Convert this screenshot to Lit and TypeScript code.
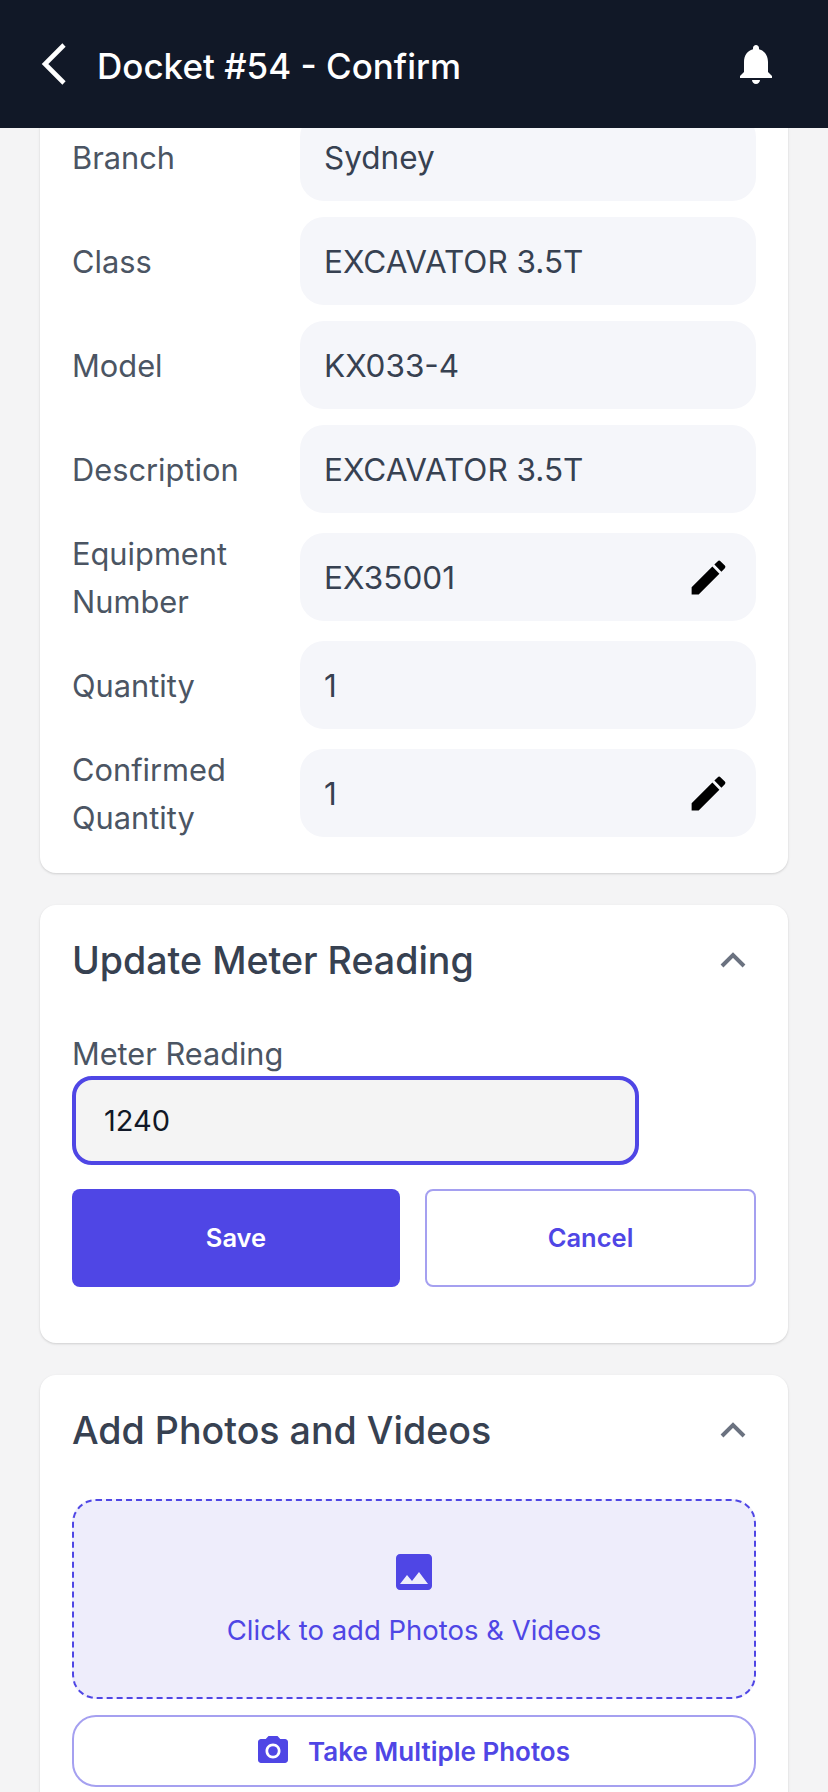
import { LitElement, html, css, svg } from "lit";
import { customElement } from "lit/decorators.js";

const editIcon = svg`<path d="M3 17.25V21h3.75L17.81 9.94l-3.75-3.75L3 17.25zM20.71 7.04c.39-.39.39-1.02 0-1.41l-2.34-2.34c-.39-.39-1.02-.39-1.41 0l-1.83 1.83 3.75 3.75 1.83-1.83z"/>`;

const rows: { label: string; value: string; edit?: boolean }[] = [
  { label: "Branch", value: "Sydney" },
  { label: "Class", value: "EXCAVATOR 3.5T" },
  { label: "Model", value: "KX033-4" },
  { label: "Description", value: "EXCAVATOR 3.5T" },
  { label: "Equipment Number", value: "EX35001", edit: true },
  { label: "Quantity", value: "1" },
  { label: "Confirmed Quantity", value: "1", edit: true },
];

@customElement("app-root")
export class AppRoot extends LitElement {
  static styles = css`
    :host {
      display: flex;
      flex-direction: column;
      height: 1792px;
      overflow: hidden;
      background: #f4f4f5;
      font-family: Inter, "Liberation Sans", sans-serif;
    }
    * { box-sizing: border-box; }
    .topbar {
      flex: none;
      height: 128px;
      background: #111827;
      display: flex;
      align-items: center;
      color: #fff;
      padding: 0 48px 0 38px;
      position: relative;
      z-index: 1;
    }
    .back { width: 30px; height: 44px; margin-right: 29px; display: block; }
    .title { flex: 1; font-size: 35px; font-weight: 500; line-height: 48px; padding-top: 4px; }
    .bell { width: 48px; height: 48px; fill: #fff; display: block; }
    .scroller { flex: 1; min-height: 0; overflow: hidden; }
    .content {
      margin-top: -15px;
      padding: 0 40px;
      display: flex;
      flex-direction: column;
      gap: 32px;
    }
    .card {
      background: #fff;
      border-radius: 16px;
      box-shadow: 0 1px 3px rgba(0,0,0,.1), 0 1px 2px rgba(0,0,0,.06);
      padding: 24px 32px 56px;
    }
    .details {
      padding: 0 32px 32px;
      display: flex;
      flex-direction: column;
      gap: 16px;
    }
    .row {
      display: grid;
      grid-template-columns: 228px 1fr;
      align-items: center;
    }
    .label { font-size: 30.8px; line-height: 48px; color: #4b5563; padding-right: 20px; transform: translateY(1px); }
    .field {
      height: 88px;
      border-radius: 24px;
      background: #f5f6fa;
      color: #374151;
      font-size: 31.5px;
      padding: 0 25px 0 24px;
      display: flex;
      align-items: center;
      justify-content: space-between;
    }
    .edit { width: 45px; height: 45px; fill: #000; display: block; }
    .head {
      height: 62px;
      margin-bottom: 38px;
      display: flex;
      align-items: center;
      justify-content: space-between;
    }
    .head h2 { margin: 0; padding-top: 2px; font-size: 37.6px; font-weight: 500; color: #374151; line-height: 60px; }
    .chev { width: 28px; height: 20px; margin-right: 9px; display: block; }
    .meter-label { font-size: 30.7px; line-height: 47px; color: #4b5563; padding-top: 1px; }
    .input {
      width: 567px;
      height: 89px;
      margin-top: -1px;
      border: 4px solid #4f46e5;
      border-radius: 20px;
      background: #f4f4f4;
      color: #111827;
      font-size: 29px;
      display: flex;
      align-items: center;
      padding-left: 28px;
    }
    .actions {
      margin-top: 24px;
      display: grid;
      grid-template-columns: 328px 1fr;
      gap: 25px;
    }
    .btn {
      height: 98px;
      border-radius: 8px;
      font-size: 25.5px;
      font-weight: 600;
      padding-bottom: 2px;
      display: flex;
      align-items: center;
      justify-content: center;
    }
    .save { background: #4f46e5; color: #fff; }
    .cancel { background: #fff; color: #4f46e5; border: 2px solid #a5a0f0; }
    .drop {
      height: 200px;
      border: 2.5px dashed #4f46e5;
      border-radius: 24px;
      background: #eeedfb;
      display: flex;
      flex-direction: column;
      align-items: center;
      justify-content: center;
      gap: 12px;
      color: #4f46e5;
      font-size: 27.5px;
      line-height: 44px;
      padding-top: 2px;
    }
    .drop svg { width: 48px; height: 48px; fill: #4f46e5; display: block; }
    .take {
      margin-top: 16px;
      height: 72px;
      border: 2px solid #a5a0f0;
      border-radius: 24px;
      background: #fff;
      color: #4f46e5;
      font-size: 26px;
      font-weight: 600;
      display: flex;
      align-items: center;
      justify-content: center;
      gap: 17px;
      padding-right: 3px;
    }
    .take svg { width: 36px; height: 36px; fill: #4f46e5; display: block; }
  `;

  private chevron() {
    return html`<svg class="chev" viewBox="0 0 28 20" fill="none" stroke="#6b7280" stroke-width="4"><path d="M3 16 14 5l11 11"/></svg>`;
  }

  render() {
    return html`
      <header class="topbar">
        <svg class="back" viewBox="0 0 30 44" fill="none" stroke="#fff" stroke-width="4.6"><path d="M26 3 7 22l19 19"/></svg>
        <div class="title">Docket #54 - Confirm</div>
        <svg class="bell" viewBox="0 0 24 24"><path d="M12 22c1.1 0 2-.9 2-2h-4c0 1.1.89 2 2 2zm6-6v-5c0-3.07-1.64-5.64-4.5-6.32V4c0-.83-.67-1.5-1.5-1.5s-1.5.67-1.5 1.5v.68C7.63 5.36 6 7.92 6 11v5l-2 2v1h16v-1l-2-2z"/></svg>
      </header>
      <div class="scroller">
        <div class="content">
          <section class="card details">
            ${rows.map(
              (r) => html`<div class="row">
                <div class="label">${r.label}</div>
                <div class="field"><span>${r.value}</span>${r.edit ? html`<svg class="edit" viewBox="0 0 24 24">${editIcon}</svg>` : ""}</div>
              </div>`
            )}
          </section>
          <section class="card">
            <div class="head"><h2>Update Meter Reading</h2>${this.chevron()}</div>
            <div class="meter-label">Meter Reading</div>
            <div class="input">1240</div>
            <div class="actions">
              <div class="btn save">Save</div>
              <div class="btn cancel">Cancel</div>
            </div>
          </section>
          <section class="card">
            <div class="head"><h2>Add Photos and Videos</h2>${this.chevron()}</div>
            <div class="drop">
              <svg viewBox="0 0 24 24"><path d="M21 19V5c0-1.1-.9-2-2-2H5c-1.1 0-2 .9-2 2v14c0 1.1.9 2 2 2h14c1.1 0 2-.9 2-2zM8.5 13.5l2.5 3.01L14.5 12l4.5 6H5l3.5-4.5z"/></svg>
              <span>Click to add Photos &amp; Videos</span>
            </div>
            <div class="take">
              <svg viewBox="0 0 24 24"><circle cx="12" cy="12" r="3.2"/><path d="M9 2L7.17 4H4c-1.1 0-2 .9-2 2v12c0 1.1.9 2 2 2h16c1.1 0 2-.9 2-2V6c0-1.1-.9-2-2-2h-3.17L15 2H9zm3 15c-2.76 0-5-2.24-5-5s2.24-5 5-5 5 2.24 5 5-2.24 5-5 5z"/></svg>
              <span>Take Multiple Photos</span>
            </div>
          </section>
        </div>
      </div>
    `;
  }
}
